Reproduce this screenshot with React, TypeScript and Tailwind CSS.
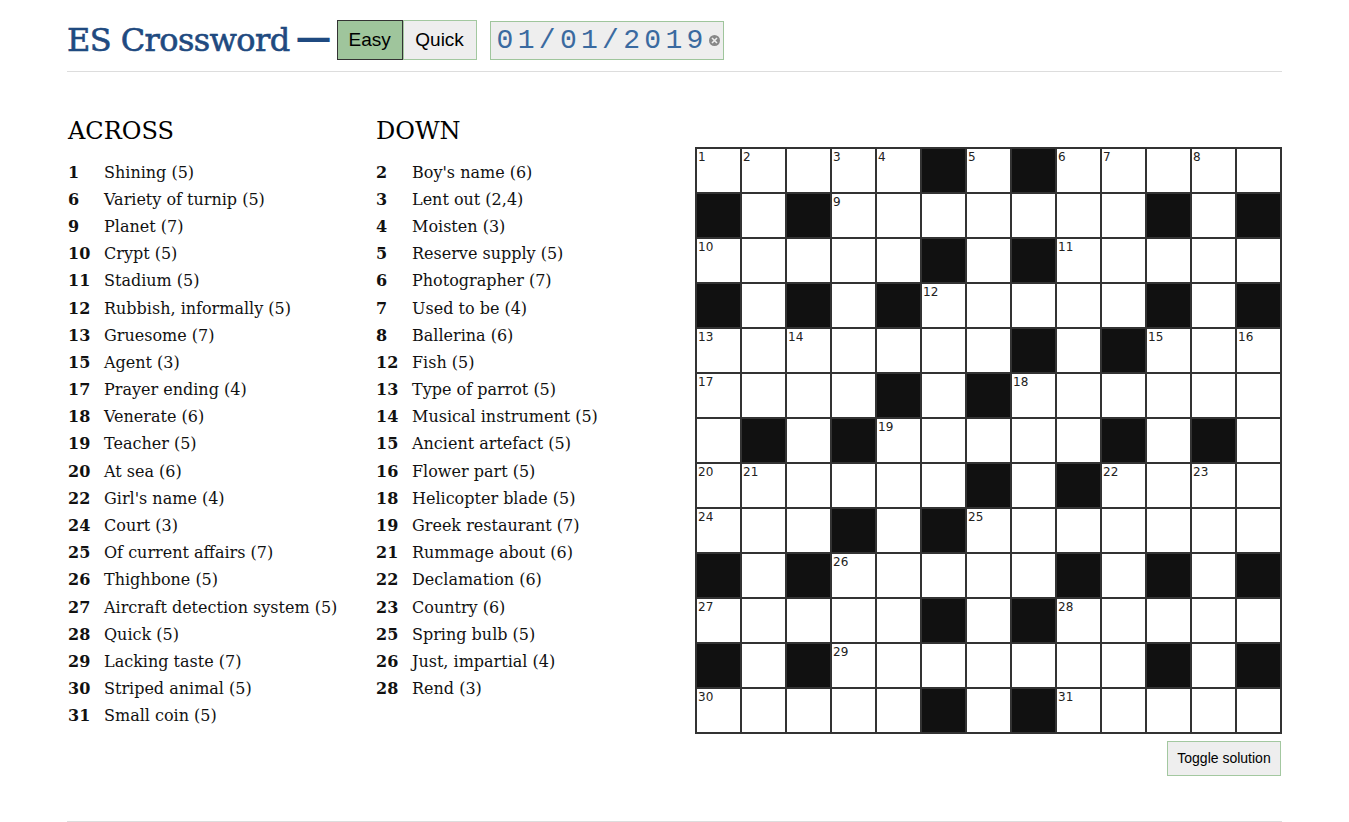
import { useState } from "react";

const grid = [
  ".....#.#.....",
  "#.#.......#.#",
  ".....#.#.....",
  "#.#.#.....#.#",
  ".......#.#...",
  "....#.#......",
  ".#.#.....#.#.",
  "......#.#....",
  "...#.#.......",
  "#.#.....#.#.#",
  ".....#.#.....",
  "#.#.......#.#",
  ".....#.#.....",
];

const across: [number, string][] = [
  [1, "Shining (5)"],
  [6, "Variety of turnip (5)"],
  [9, "Planet (7)"],
  [10, "Crypt (5)"],
  [11, "Stadium (5)"],
  [12, "Rubbish, informally (5)"],
  [13, "Gruesome (7)"],
  [15, "Agent (3)"],
  [17, "Prayer ending (4)"],
  [18, "Venerate (6)"],
  [19, "Teacher (5)"],
  [20, "At sea (6)"],
  [22, "Girl's name (4)"],
  [24, "Court (3)"],
  [25, "Of current affairs (7)"],
  [26, "Thighbone (5)"],
  [27, "Aircraft detection system (5)"],
  [28, "Quick (5)"],
  [29, "Lacking taste (7)"],
  [30, "Striped animal (5)"],
  [31, "Small coin (5)"],
];

const down: [number, string][] = [
  [2, "Boy's name (6)"],
  [3, "Lent out (2,4)"],
  [4, "Moisten (3)"],
  [5, "Reserve supply (5)"],
  [6, "Photographer (7)"],
  [7, "Used to be (4)"],
  [8, "Ballerina (6)"],
  [12, "Fish (5)"],
  [13, "Type of parrot (5)"],
  [14, "Musical instrument (5)"],
  [15, "Ancient artefact (5)"],
  [16, "Flower part (5)"],
  [18, "Helicopter blade (5)"],
  [19, "Greek restaurant (7)"],
  [21, "Rummage about (6)"],
  [22, "Declamation (6)"],
  [23, "Country (6)"],
  [25, "Spring bulb (5)"],
  [26, "Just, impartial (4)"],
  [28, "Rend (3)"],
];

// number the cells the usual way: a white cell that starts a word across or down
function numberGrid() {
  const nums: (number | null)[][] = [];
  let n = 0;
  const white = (r: number, c: number) =>
    r >= 0 && r < 13 && c >= 0 && c < 13 && grid[r][c] === ".";
  for (let r = 0; r < 13; r++) {
    const row: (number | null)[] = [];
    for (let c = 0; c < 13; c++) {
      if (!white(r, c)) {
        row.push(null);
        continue;
      }
      const a = !white(r, c - 1) && white(r, c + 1);
      const d = !white(r - 1, c) && white(r + 1, c);
      row.push(a || d ? ++n : null);
    }
    nums.push(row);
  }
  return nums;
}

function ClueList({ title, clues }: { title: string; clues: [number, string][] }) {
  return (
    <div>
      <h2 className="text-[24px] leading-[32px] text-black">{title}</h2>
      <ul className="mt-[12px]">
        {clues.map(([num, text]) => (
          <li key={num} className="flex h-[27.2px] items-center text-[16px] text-[#111]">
            <span className="w-[36px] font-bold">{num}</span>
            <span>{text}</span>
          </li>
        ))}
      </ul>
    </div>
  );
}

export default function App() {
  const [mode, setMode] = useState<"easy" | "quick">("easy");
  const nums = numberGrid();

  return (
    <div className="w-[1215px] mx-auto bg-white" style={{ fontFamily: '"DejaVu Serif", serif' }}>
      <header className="h-[72px] border-b border-[#ddd] flex items-start pt-[20px]">
        <h1 className="text-[32px] leading-[40px] text-[#1f4a80] tracking-[-0.6px] [-webkit-text-stroke:0.6px_#1f4a80]">
          ES Crossword
        </h1>
        <span className="text-[36px] leading-[32px] text-[#1f4a80] ml-[6px] font-bold">—</span>
        <div className="flex ml-[5px]" style={{ fontFamily: '"Liberation Sans", Arial, sans-serif' }}>
          <button
            onClick={() => setMode("easy")}
            className={
              mode === "easy"
                ? "h-[40px] w-[66px] text-[19px] bg-[#9fc59c] border border-[#333] text-black"
                : "h-[40px] w-[66px] text-[19px] bg-[#eee] border border-[#a3c8a0] text-black"
            }
          >
            Easy
          </button>
          <button
            onClick={() => setMode("quick")}
            className={
              mode === "quick"
                ? "h-[40px] w-[74px] text-[19px] bg-[#9fc59c] border border-[#333] text-black"
                : "h-[40px] w-[74px] text-[19px] bg-[#eee] border border-[#a3c8a0] text-black"
            }
          >
            Quick
          </button>
        </div>
        <div className="ml-[13px] mt-[1px] h-[39px] w-[234px] bg-[#eee] border border-[#9fc59c] flex items-center pl-[6px] pr-[3px]">
          <span
            className="text-[28px] leading-none text-[#3a6aa0] tracking-[4.3px]"
            style={{ fontFamily: '"Liberation Mono", "Courier New", monospace' }}
          >
            01/01/2019
          </span>
          <span className="ml-auto w-[11px] h-[11px] rounded-full bg-[#888] flex items-center justify-center">
            <svg width="7" height="7" viewBox="0 0 7 7">
              <path d="M1 1L6 6M6 1L1 6" stroke="#eee" strokeWidth="1.6" />
            </svg>
          </span>
        </div>
      </header>

      <main className="flex pt-[43px]">
        <div className="w-[309px] pl-[1px]">
          <ClueList title="ACROSS" clues={across} />
        </div>
        <div className="w-[319px]">
          <ClueList title="DOWN" clues={down} />
        </div>
        <div className="pt-[32px]">
          <div
            className="grid grid-cols-[repeat(13,43px)] gap-[2px] bg-[#333] p-[2px]"
            style={{ fontFamily: '"DejaVu Sans", Verdana, sans-serif' }}
          >
            {grid.flatMap((row, r) =>
              row.split("").map((ch, c) =>
                ch === "#" ? (
                  <div key={`${r}-${c}`} className="h-[43px] bg-[#111]" />
                ) : (
                  <div key={`${r}-${c}`} className="h-[43px] bg-white">
                    {nums[r][c] !== null && (
                      <span className="block pl-[1px] pt-[2px] text-[12px] leading-none text-[#222]">
                        {nums[r][c]}
                      </span>
                    )}
                  </div>
                )
              )
            )}
          </div>
          <div className="flex justify-end mt-[7px] pr-[1px]">
            <button
              className="h-[35px] w-[114px] bg-[#eee] border border-[#a3c8a0] text-[14px] text-black"
              style={{ fontFamily: '"Liberation Sans", Arial, sans-serif' }}
            >
              Toggle solution
            </button>
          </div>
        </div>
      </main>

      <div className="mt-[45px] border-b border-[#ddd]" />
    </div>
  );
}
